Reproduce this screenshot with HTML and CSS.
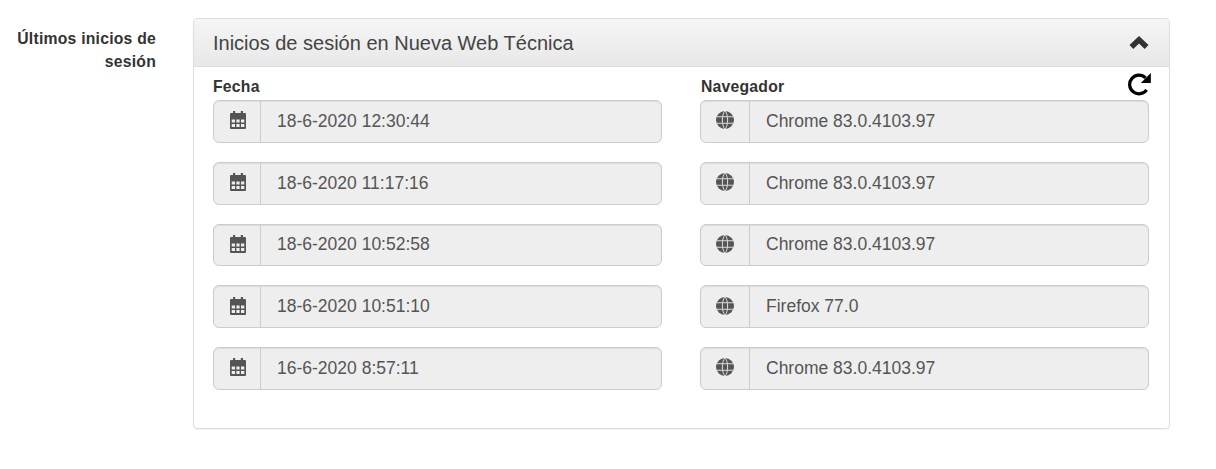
FILE: index.html
```html
<!DOCTYPE html>
<html lang="es">
<head>
<meta charset="utf-8">
<title>Últimos inicios de sesión</title>
<link rel="stylesheet" href="styles.css">
</head>
<body>
<svg class="defs" width="0" height="0">
  <symbol id="cal" viewBox="0 0 16 18">
    <path d="M3 0h2.200v3H3zM10.800 0H13v3h-2.200z"/>
    <path fill-rule="evenodd" d="M1 2h14a1 1 0 0 1 1 1v14a1 1 0 0 1-1 1H1a1 1 0 0 1-1-1V3a1 1 0 0 1 1-1zM1.700 8.500V11.500h3.300V8.500zM6.400 8.500V11.500h3.200V8.500zM11 8.500V11.500h3.300V8.500zM1.700 13v3h3.300v-3zM6.400 13v3h3.200v-3zM11 13v3h3.300v-3z"/>
  </symbol>
  <symbol id="globe" viewBox="0 0 18 18">
    <circle cx="9" cy="9" r="9"/>
    <path d="M0 5.800h18M0 12.200h18" stroke="#ddd" stroke-width="1.100" fill="none"/>
    <path d="M9 0C5.500 3 5.500 15 9 18M9 0c3.500 3 3.500 15 0 18" stroke="#ddd" stroke-width="1" fill="none"/>
  </symbol>
</svg>
<main class="row">
  <div class="side-label">Últimos inicios de sesión</div>
  <section class="panel">
    <header class="panel-head">
      <h3 class="panel-title">Inicios de sesión en Nueva Web Técnica</h3>
      <svg class="chevron" viewBox="0 0 20 14"><path d="M10 0l9.500 9-3.800 4L10 7.500 4.300 13 .5 9z"/></svg>
    </header>
    <div class="panel-body">
      <svg class="reload" viewBox="0 0 24 24"><path d="M17.500 5.900A9.300 9.300 0 1 0 18.600 17.800" fill="none" stroke="#000" stroke-width="3.200"/><path d="M22.800 1v10H12.800z"/></svg>
      <div class="columns">
        <div class="col">
          <div class="col-label">Fecha</div>
          <div class="field"><span class="addon"><svg class="ico-cal"><use href="#cal"/></svg></span><span class="value">18-6-2020 12:30:44</span></div>
          <div class="field"><span class="addon"><svg class="ico-cal"><use href="#cal"/></svg></span><span class="value">18-6-2020 11:17:16</span></div>
          <div class="field"><span class="addon"><svg class="ico-cal"><use href="#cal"/></svg></span><span class="value">18-6-2020 10:52:58</span></div>
          <div class="field"><span class="addon"><svg class="ico-cal"><use href="#cal"/></svg></span><span class="value">18-6-2020 10:51:10</span></div>
          <div class="field"><span class="addon"><svg class="ico-cal"><use href="#cal"/></svg></span><span class="value">16-6-2020 8:57:11</span></div>
        </div>
        <div class="col">
          <div class="col-label">Navegador</div>
          <div class="field"><span class="addon"><svg class="ico-globe"><use href="#globe"/></svg></span><span class="value">Chrome 83.0.4103.97</span></div>
          <div class="field"><span class="addon"><svg class="ico-globe"><use href="#globe"/></svg></span><span class="value">Chrome 83.0.4103.97</span></div>
          <div class="field"><span class="addon"><svg class="ico-globe"><use href="#globe"/></svg></span><span class="value">Chrome 83.0.4103.97</span></div>
          <div class="field"><span class="addon"><svg class="ico-globe"><use href="#globe"/></svg></span><span class="value">Firefox 77.0</span></div>
          <div class="field"><span class="addon"><svg class="ico-globe"><use href="#globe"/></svg></span><span class="value">Chrome 83.0.4103.97</span></div>
        </div>
      </div>
    </div>
  </section>
</main>
</body>
</html>
```
FILE: styles.css
```css
* { box-sizing: border-box; }
html, body { margin: 0; padding: 0; background: #fff; }
body {
  font-family: "Liberation Sans", Arial, sans-serif;
  color: #333;
  height: 469px;
  overflow: hidden;
}
.defs { position: absolute; }
.row {
  display: flex;
  align-items: flex-start;
  padding: 18px 46px 0 0;
}
.side-label {
  width: 156px;
  margin-right: 37px;
  padding: 9px 0 0 12px;
  text-align: right;
  font-size: 15.750px;
  font-weight: 700;
  line-height: 23px;
  letter-spacing: .22px;
}
.panel {
  flex: 1;
  height: 411px;
  border: 1px solid #ddd;
  border-radius: 4px;
  box-shadow: 0 1px 1px rgba(0,0,0,.05);
}
.panel-head {
  height: 48px;
  display: flex;
  align-items: center;
  justify-content: space-between;
  padding: 0 20px 0 19px;
  border-bottom: 1px solid #ddd;
  border-radius: 3px 3px 0 0;
  background: linear-gradient(#f5f5f5, #e8e8e8);
}
.panel-title {
  margin: 2px 0 0;
  font-size: 20px;
  font-weight: 400;
  color: #444;
}
.chevron { width: 20px; height: 14px; fill: #333; }
.panel-body {
  position: relative;
  padding: 10px 20px 0 19px;
}
.reload {
  position: absolute;
  top: 5px;
  right: 17px;
  width: 24px;
  height: 24px;
}
.columns {
  display: grid;
  grid-template-columns: 449px 449px;
  column-gap: 38px;
}
.col-label {
  font-size: 15.750px;
  font-weight: 700;
  line-height: 20px;
  height: 23px;
  letter-spacing: .22px;
}
.col:last-child .col-label { padding-left: 1px; }
.field {
  display: flex;
  height: 42.750px;
  margin-bottom: 19px;
  background: #eee;
  border: 1px solid #ccc;
  border-radius: 6px;
  box-shadow: inset 0 1px 1px rgba(0,0,0,.075);
  color: #555;
  font-size: 17.500px;
}
.addon {
  flex: none;
  width: 47px;
  display: flex;
  align-items: center;
  justify-content: center;
  padding-bottom: 2px;
  border-right: 1px solid #ccc;
}
.col:first-child .addon { padding-left: 1px; }
.col:last-child .addon { width: 49px; }
.value {
  display: flex;
  align-items: center;
  padding-left: 16px;
}
.ico-cal { width: 16px; height: 18px; fill: #555; }
.ico-globe { width: 18px; height: 18px; fill: #555; }
```
